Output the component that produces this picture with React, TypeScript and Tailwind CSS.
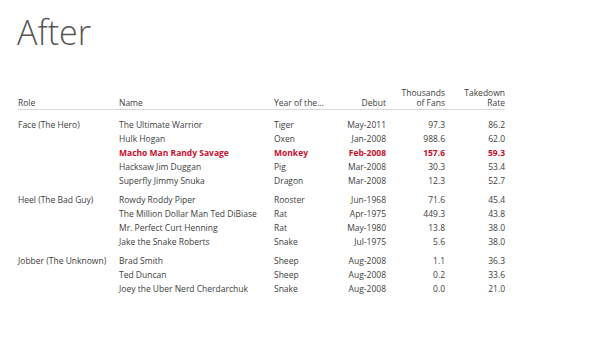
import React from 'react';

interface Row {
  name: string;
  year: string;
  debut: string;
  fans: string;
  rate: string;
  hot?: boolean;
}

interface Group {
  role: string;
  rows: Row[];
}

const groups: Group[] = [
  {
    role: 'Face (The Hero)',
    rows: [
      { name: 'The Ultimate Warrior', year: 'Tiger', debut: 'May-2011', fans: '97.3', rate: '86.2' },
      { name: 'Hulk Hogan', year: 'Oxen', debut: 'Jan-2008', fans: '988.6', rate: '62.0' },
      { name: 'Macho Man Randy Savage', year: 'Monkey', debut: 'Feb-2008', fans: '157.6', rate: '59.3', hot: true },
      { name: 'Hacksaw Jim Duggan', year: 'Pig', debut: 'Mar-2008', fans: '30.3', rate: '53.4' },
      { name: 'Superfly Jimmy Snuka', year: 'Dragon', debut: 'Mar-2008', fans: '12.3', rate: '52.7' },
    ],
  },
  {
    role: 'Heel (The Bad Guy)',
    rows: [
      { name: 'Rowdy Roddy Piper', year: 'Rooster', debut: 'Jun-1968', fans: '71.6', rate: '45.4' },
      { name: 'The Million Dollar Man Ted DiBiase', year: 'Rat', debut: 'Apr-1975', fans: '449.3', rate: '43.8' },
      { name: 'Mr. Perfect Curt Henning', year: 'Rat', debut: 'May-1980', fans: '13.8', rate: '38.0' },
      { name: 'Jake the Snake Roberts', year: 'Snake', debut: 'Jul-1975', fans: '5.6', rate: '38.0' },
    ],
  },
  {
    role: 'Jobber (The Unknown)',
    rows: [
      { name: 'Brad Smith', year: 'Sheep', debut: 'Aug-2008', fans: '1.1', rate: '36.3' },
      { name: 'Ted Duncan', year: 'Sheep', debut: 'Aug-2008', fans: '0.2', rate: '33.6' },
      { name: 'Joey the Uber Nerd Cherdarchuk', year: 'Snake', debut: 'Aug-2008', fans: '0.0', rate: '21.0' },
    ],
  },
];

const App: React.FC = () => {
  return (
    <div
      className="w-[590px] h-[340px] bg-white text-[#404040] overflow-hidden"
      style={{ fontFamily: '"Open Sans", "Liberation Sans", sans-serif' }}
    >
      <h1 className="pl-[17px] pt-[11px] text-[34px] leading-[42px] font-light text-[#555]">After</h1>

      <div className="ml-[18px] mt-[35px] w-[487px] text-[8.5px]">
        <div className="flex items-end leading-[10px] pb-[1px] border-b border-[#d9d9d9]">
          <div className="w-[101px]">Role</div>
          <div className="w-[155px]">Name</div>
          <div className="w-[62px]">Year of the...</div>
          <div className="w-[50px] text-right">Debut</div>
          <div className="w-[59px] text-right">Thousands<br />of Fans</div>
          <div className="w-[60px] text-right">Takedown<br />Rate</div>
        </div>

        <div className="pt-[8px] flex flex-col gap-[4.5px]">
          {groups.map((g) => (
            <div key={g.role} className="flex">
              <div className="w-[101px] leading-[14.1px]">{g.role}</div>
              <div className="flex flex-col">
                {g.rows.map((r) => (
                  <div
                    key={r.name}
                    className={`flex leading-[14.1px] ${r.hot ? 'font-bold text-[#c8102e]' : ''}`}
                  >
                    <div className="w-[155px] whitespace-nowrap">{r.name}</div>
                    <div className="w-[62px]">{r.year}</div>
                    <div className="w-[50px] text-right">{r.debut}</div>
                    <div className="w-[59px] text-right">{r.fans}</div>
                    <div className="w-[60px] text-right">{r.rate}</div>
                  </div>
                ))}
              </div>
            </div>
          ))}
        </div>
      </div>
    </div>
  );
};

export default App;
